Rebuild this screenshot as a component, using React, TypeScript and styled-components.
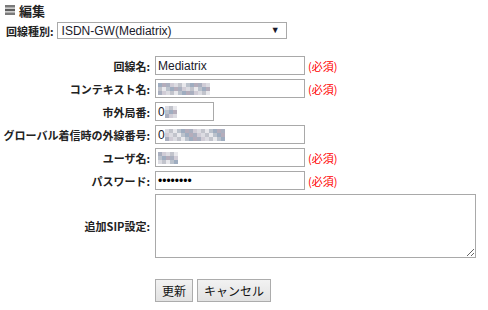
import React from 'react'
import styled, { createGlobalStyle } from 'styled-components'

const GlobalStyle = createGlobalStyle`
  body {
    margin: 0;
    background: #fff;
    color: #000;
    font-family: 'Liberation Sans', 'Noto Sans CJK JP', sans-serif;
    font-size: 12px;
  }
`

const Page = styled.div`
  width: 488px;
  height: 310px;
  padding-top: 2px;
  box-sizing: border-box;
`

const Header = styled.div`
  display: flex;
  align-items: center;
  gap: 4px;
  height: 16px;
  padding-left: 5px;
  font-family: 'Noto Sans CJK JP', sans-serif;
  font-size: 13px;
  font-weight: bold;
  color: #222;
`

const TypeRow = styled.div`
  display: flex;
  align-items: center;
  gap: 3px;
  margin-top: 4px;
  padding-left: 6px;
`

const Label = styled.span`
  font-family: 'Noto Sans CJK JP', sans-serif;
  font-size: 11px;
  font-weight: bold;
  color: #222;
  white-space: nowrap;
`

const SelectBox = styled.div`
  display: flex;
  align-items: center;
  justify-content: space-between;
  box-sizing: border-box;
  width: 230px;
  height: 17px;
  padding: 0 6px 0 4px;
  border: 1px solid #a9a9a9;
  background: #fff;
  color: #1a1a2a;
`

const Arrow = styled.span`
  font-size: 9px;
  line-height: 1;
`

const Form = styled.div`
  display: grid;
  grid-template-columns: 150px 1fr;
  column-gap: 5px;
  row-gap: 4px;
  margin-top: 17px;
`

const FieldLabel = styled(Label)`
  align-self: center;
  text-align: right;
`

const FieldCell = styled.div`
  display: flex;
  align-items: center;
  gap: 3px;
`

const FieldBox = styled.div<{ $w: number }>`
  display: flex;
  align-items: center;
  box-sizing: border-box;
  width: ${(p) => p.$w}px;
  height: 19px;
  padding: 0 2px;
  border: 1px solid #a9a9a9;
  background: #fff;
  color: #1a1a2a;
  white-space: nowrap;
  overflow: hidden;
`

const Dots = styled.span`
  color: #000;
`

const Required = styled.span`
  font-family: 'Noto Sans CJK JP', sans-serif;
  font-size: 11px;
  color: #f00;
`

const MosaicGrid = styled.span<{ $cols: number }>`
  display: inline-grid;
  grid-template-columns: repeat(${(p) => p.$cols}, 4px);
  grid-auto-rows: 4px;
`

const Cell = styled.span<{ $c: string }>`
  background: ${(p) => p.$c};
`

const TextArea = styled.textarea`
  box-sizing: border-box;
  width: 321px;
  height: 64px;
  border: 1px solid #a9a9a9;
  margin: 0;
  padding: 2px;
  font-family: 'Liberation Sans', sans-serif;
  font-size: 12px;
`

const ButtonRow = styled.div`
  grid-column: 2;
  display: flex;
  gap: 4px;
  margin-top: 17px;
`

const Button = styled.button`
  box-sizing: border-box;
  height: 23px;
  padding: 0 6px;
  border: 1px solid #acacac;
  border-radius: 0;
  background: linear-gradient(#f2f2f2, #e2e2e2);
  font-family: 'Noto Sans CJK JP', sans-serif;
  font-size: 12px;
  color: #111;
`

const palette = ['#dcdce2', '#c2c4cc', '#aab0c0', '#d0ccd6', '#9fadc0', '#b5adbb', '#e8e8ec', '#bbc2cc']

function Mosaic({ cols, rows, seed }: { cols: number; rows: number; seed: number }) {
  const cells = []
  let s = seed
  for (let i = 0; i < cols * rows; i++) {
    s = (s * 9301 + 49297) % 233280
    cells.push(<Cell key={i} $c={palette[s % palette.length]} />)
  }
  return <MosaicGrid $cols={cols}>{cells}</MosaicGrid>
}

function MenuIcon() {
  return (
    <svg width="10" height="10" viewBox="0 0 10 10">
      <rect x="0" y="0" width="10" height="2.6" fill="#7a7a7a" />
      <rect x="0" y="3.7" width="10" height="2.6" fill="#5e5e5e" />
      <rect x="0" y="7.4" width="10" height="2.6" fill="#7a7a7a" />
    </svg>
  )
}

export default function App() {
  return (
    <Page>
      <GlobalStyle />
      <Header>
        <MenuIcon />
        編集
      </Header>
      <TypeRow>
        <Label>回線種別:</Label>
        <SelectBox>
          <span>ISDN-GW(Mediatrix)</span>
          <Arrow>▼</Arrow>
        </SelectBox>
      </TypeRow>
      <Form>
        <FieldLabel>回線名:</FieldLabel>
        <FieldCell>
          <FieldBox $w={150}>Mediatrix</FieldBox>
          <Required>(必須)</Required>
        </FieldCell>

        <FieldLabel>コンテキスト名:</FieldLabel>
        <FieldCell>
          <FieldBox $w={150}>
            <Mosaic cols={13} rows={3} seed={7} />
          </FieldBox>
          <Required>(必須)</Required>
        </FieldCell>

        <FieldLabel>市外局番:</FieldLabel>
        <FieldCell>
          <FieldBox $w={59}>
            0<Mosaic cols={3} rows={3} seed={3} />
          </FieldBox>
        </FieldCell>

        <FieldLabel>グローバル着信時の外線番号:</FieldLabel>
        <FieldCell>
          <FieldBox $w={150}>
            0<Mosaic cols={15} rows={3} seed={11} />
          </FieldBox>
        </FieldCell>

        <FieldLabel>ユーザ名:</FieldLabel>
        <FieldCell>
          <FieldBox $w={150}>
            <Mosaic cols={5} rows={3} seed={5} />
          </FieldBox>
          <Required>(必須)</Required>
        </FieldCell>

        <FieldLabel>パスワード:</FieldLabel>
        <FieldCell>
          <FieldBox $w={150}>
            <Dots>••••••••</Dots>
          </FieldBox>
          <Required>(必須)</Required>
        </FieldCell>

        <FieldLabel>追加SIP設定:</FieldLabel>
        <FieldCell>
          <TextArea />
        </FieldCell>

        <ButtonRow>
          <Button>更新</Button>
          <Button>キャンセル</Button>
        </ButtonRow>
      </Form>
    </Page>
  )
}
